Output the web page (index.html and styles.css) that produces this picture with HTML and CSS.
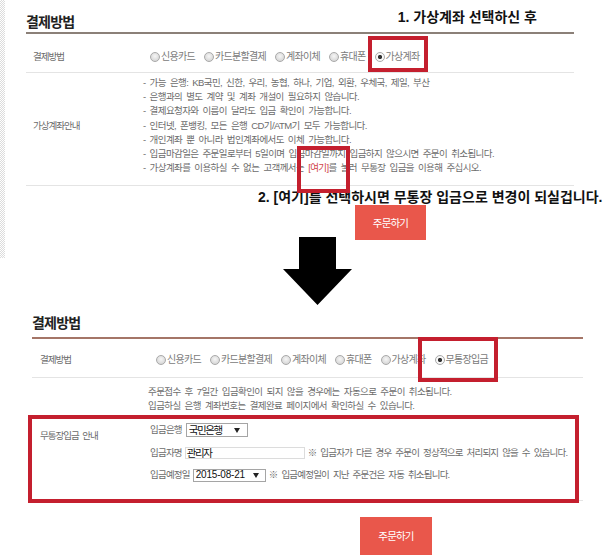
FILE: index.html
```html
<!DOCTYPE html>
<html lang="ko">
<head>
    <meta charset="UTF-8">
    <meta name="viewport" content="width=device-width, initial-scale=1.0">
    <title>결제방법 안내</title>
    <link rel="stylesheet" href="styles.css">
</head>
<body>

    <!-- 1단계: 가상계좌 선택 화면 -->
    <div class="shot shot-top">
        <div class="pay pay-top">
            <div class="pay-head">
                <h2>결제방법</h2>
                <p class="note note-first">1. 가상계좌 선택하신 후</p>
            </div>

            <div class="row row-method">
                <div class="row-label">결제방법</div>
                <div class="row-body">
                    <div class="radios">
                        <span class="radio"><i></i>신용카드</span>
                        <span class="radio"><i></i>카드분할결제</span>
                        <span class="radio"><i></i>계좌이체</span>
                        <span class="radio"><i></i>휴대폰</span>
                        <span class="radio checked marked"><i></i>가상계좌</span>
                    </div>
                </div>
            </div>

            <div class="row row-guide">
                <div class="row-label">가상계좌안내</div>
                <ul class="row-body guide">
                    <li>- 가능 은행: KB국민, 신한, 우리, 농협, 하나, 기업, 외환, 우체국, 제일, 부산</li>
                    <li>- 은행과의 별도 계약 및 계좌 개설이 필요하지 않습니다.</li>
                    <li>- 결제요청자와 이름이 달라도 입금 확인이 가능합니다.</li>
                    <li>- 인터넷, 폰뱅킹, 모든 은행 CD기/ATM기 모두 가능합니다.</li>
                    <li>- 개인계좌 뿐 아니라 법인계좌에서도 이체 가능합니다.</li>
                    <li>- 입금마감일은 주문일로부터 5일이며 입금마감일까지 입금하지 않으시면 주문이 취소됩니다.</li>
                    <li>- 가상계좌를 이용하실 수 없는 고객께서는 <span class="here">[여기]</span>를 눌러 무통장 입금을 이용해 주십시오.</li>
                </ul>
            </div>

            <p class="note note-second">2. [여기]를 선택하시면 무통장 입금으로 변경이 되실겁니다.</p>
            <button class="order order-top">주문하기</button>
        </div>
    </div>

    <svg class="arrow" viewBox="0 0 70 68" width="70" height="68">
        <polygon points="16,0 53,0 53,32 69,32 34.5,68 0,32 16,32" fill="#000"/>
    </svg>

    <!-- 2단계: 무통장입금으로 변경된 화면 -->
    <div class="shot shot-bottom">
        <div class="pay pay-bottom">
            <div class="pay-head">
                <h2>결제방법</h2>
            </div>

            <div class="row row-method">
                <div class="row-label">결제방법</div>
                <div class="row-body">
                    <div class="radios">
                        <span class="radio"><i></i>신용카드</span>
                        <span class="radio"><i></i>카드분할결제</span>
                        <span class="radio"><i></i>계좌이체</span>
                        <span class="radio"><i></i>휴대폰</span>
                        <span class="radio"><i></i>가상계좌</span>
                        <span class="radio checked marked"><i></i>무통장입금</span>
                    </div>
                </div>
            </div>

            <div class="row row-deposit">
                <div class="row-label">무통장입금 안내</div>
                <div class="row-body">
                    <p class="info">주문접수 후 7일간 입금확인이 되지 않을 경우에는 자동으로 주문이 취소됩니다.</p>
                    <p class="info">입금하실 은행 계좌번호는 결제완료 페이지에서 확인하실 수 있습니다.</p>
                    <div class="form">
                        <div class="form-row">
                            <span>입금은행</span>
                            <span class="select select-bank">국민은행<b class="caret"></b></span>
                        </div>
                        <div class="form-row">
                            <span>입금자명</span>
                            <span class="input">관리자</span>
                            <span>※ 입금자가 다른 경우 주문이 정상적으로 처리되지 않을 수 있습니다.</span>
                        </div>
                        <div class="form-row">
                            <span>입금예정일</span>
                            <span class="select select-date">2015-08-21<b class="caret"></b></span>
                            <span>※ 입금예정일이 지난 주문건은 자동 취소됩니다.</span>
                        </div>
                    </div>
                </div>
            </div>

            <button class="order order-bottom">주문하기</button>
        </div>
    </div>

</body>
</html>
```

FILE: styles.css
```css
body {
    margin: 0;
    background-color: #fff;
    font-family: "Liberation Sans", "Noto Sans CJK KR", sans-serif;
    font-size: 9.5px;
    line-height: 14px;
    letter-spacing: -0.6px;
    word-spacing: 2px;
    color: #6c6c6c;
}
p {
    margin: 0;
}

/* screenshot frames */
.shot {
    position: relative;
}
.shot-top::before {
    content: '';
    position: absolute;
    left: 0;
    top: 0;
    width: 5px;
    height: 258px;
    background: repeating-conic-gradient(#dcdcdc 0 25%, #fff 0 50%) 0 0 / 2px 2px;
}
.pay-top {
    margin-left: 26px;
    width: 548px;
}
.pay-bottom {
    margin-left: 32px;
    width: 551px;
}

/* title */
.pay-head {
    display: flex;
    justify-content: space-between;
    align-items: flex-end;
    height: 32px;
    border-bottom: 2px solid #8b8078;
}
.pay-bottom .pay-head {
    border-bottom-color: #a47567;
}
.pay-head h2 {
    margin: 0;
    padding-bottom: 1px;
    font-family: "Noto Sans CJK KR", sans-serif;
    font-size: 14px;
    line-height: 20px;
    font-weight: bold;
    letter-spacing: -0.8px;
    word-spacing: 0;
    color: #222;
}
.pay-bottom .pay-head h2 {
    padding-bottom: 5px;
}

/* annotations */
.note {
    font-family: "Liberation Sans", "Noto Sans CJK KR", sans-serif;
    font-size: 14px;
    line-height: 18px;
    font-weight: bold;
    letter-spacing: 0;
    word-spacing: 0;
    color: #111;
    white-space: nowrap;
}
.note-first {
    align-self: flex-start;
    margin: 8px 37px 0 0;
}
.note-second {
    margin: 2px 0 0 232px;
}

/* rows */
.row {
    display: flex;
    border-bottom: 1px solid #e4e4e4;
}
.row-label {
    flex: none;
    box-sizing: border-box;
    width: 117px;
    padding-left: 7px;
    letter-spacing: -1px;
    color: #6a6a6a;
}
.pay-bottom .row-label {
    width: 116px;
    padding-left: 8px;
}
.row-body {
    flex: 1;
}
.pay-top .row-method {
    padding: 16px 0 8px;
}
.pay-bottom .row-method {
    padding: 14px 0 10px;
}

/* radio buttons */
.radios {
    display: flex;
    gap: 9px;
    margin-left: 7px;
}
.pay-bottom .radios {
    margin-left: 8px;
}
.radio {
    position: relative;
    display: flex;
    align-items: center;
    gap: 1px;
    font-size: 10px;
    letter-spacing: -0.7px;
    color: #7a7a7a;
    white-space: nowrap;
}
.radio i {
    width: 10px;
    height: 10px;
    box-sizing: border-box;
    border: 1px solid #a9a9a9;
    border-radius: 50%;
    background: radial-gradient(circle at 50% 40%, #f6f6f6, #cdcdcd);
}
.radio.checked i {
    background: radial-gradient(circle, #333 0 1.8px, #f8f8f8 2.4px);
}
.radio.marked::after {
    content: '';
    position: absolute;
    border: 4px solid #c41f2e;
}
.pay-top .radio.marked::after {
    left: -7px;
    right: -8px;
    top: -14px;
    bottom: -8px;
}
.pay-bottom .radio.marked::after {
    left: -17px;
    right: -10px;
    top: -16px;
    bottom: -15px;
}

/* virtual account guide */
.row-guide {
    align-items: center;
    padding: 3px 0 9.6px;
}
.guide {
    margin: 0;
    padding: 0;
    list-style: none;
}
.guide li {
    line-height: 14.2px;
    white-space: nowrap;
}
.here {
    position: relative;
    color: #d0444a;
}
.here::after {
    content: '';
    position: absolute;
    left: -11px;
    right: -21px;
    top: -16px;
    bottom: -20px;
    border: 4px solid #c41f2e;
}

/* deposit form */
.row-deposit {
    position: relative;
    align-items: center;
    padding: 7px 0 13px;
}
.row-deposit::after {
    content: '';
    position: absolute;
    left: -4px;
    right: 4px;
    top: 37px;
    bottom: -3.5px;
    border: 4px solid #c41f2e;
}
.info {
    line-height: 13.5px;
    white-space: nowrap;
}
.form {
    margin-top: 7px;
}
.form-row {
    display: flex;
    align-items: center;
    gap: 3px;
    height: 22.5px;
    padding-left: 2px;
    letter-spacing: -0.8px;
    white-space: nowrap;
}
.select {
    display: inline-flex;
    align-items: center;
    box-sizing: border-box;
    border: 1px solid #a5a5a5;
    line-height: 12px;
    color: #111;
}
.select-bank {
    margin-left: 1px;
    height: 14px;
    gap: 12px;
    padding: 0 7px 0 2px;
    font-size: 10.5px;
    letter-spacing: -1.4px;
}
.select-date {
    height: 13px;
    gap: 8px;
    padding: 0 6px 0 2px;
    font-family: "Liberation Sans", sans-serif;
    font-size: 10px;
    letter-spacing: -0.2px;
}
.caret {
    width: 0;
    height: 0;
    border-left: 3px solid transparent;
    border-right: 3px solid transparent;
    border-top: 5px solid #222;
}
.input {
    display: inline-block;
    box-sizing: border-box;
    width: 120px;
    height: 12px;
    padding-left: 1px;
    border: 1px solid #dcdcdc;
    line-height: 10px;
    font-size: 10.5px;
    letter-spacing: -1.4px;
    color: #111;
}

/* order buttons */
.order {
    display: block;
    padding: 0;
    border: none;
    background-color: #e9574b;
    color: #fff;
    font-family: "Noto Sans CJK KR", sans-serif;
    font-size: 10.5px;
    letter-spacing: -0.8px;
    cursor: pointer;
}
.order-top {
    margin: -1px 0 0 329px;
    width: 71px;
    height: 35px;
}
.order-bottom {
    margin: 16px 0 0 328px;
    width: 72px;
    height: 38px;
}

/* arrow between the two screens */
.arrow {
    display: block;
    margin: -3px 0 0 283px;
}
```
